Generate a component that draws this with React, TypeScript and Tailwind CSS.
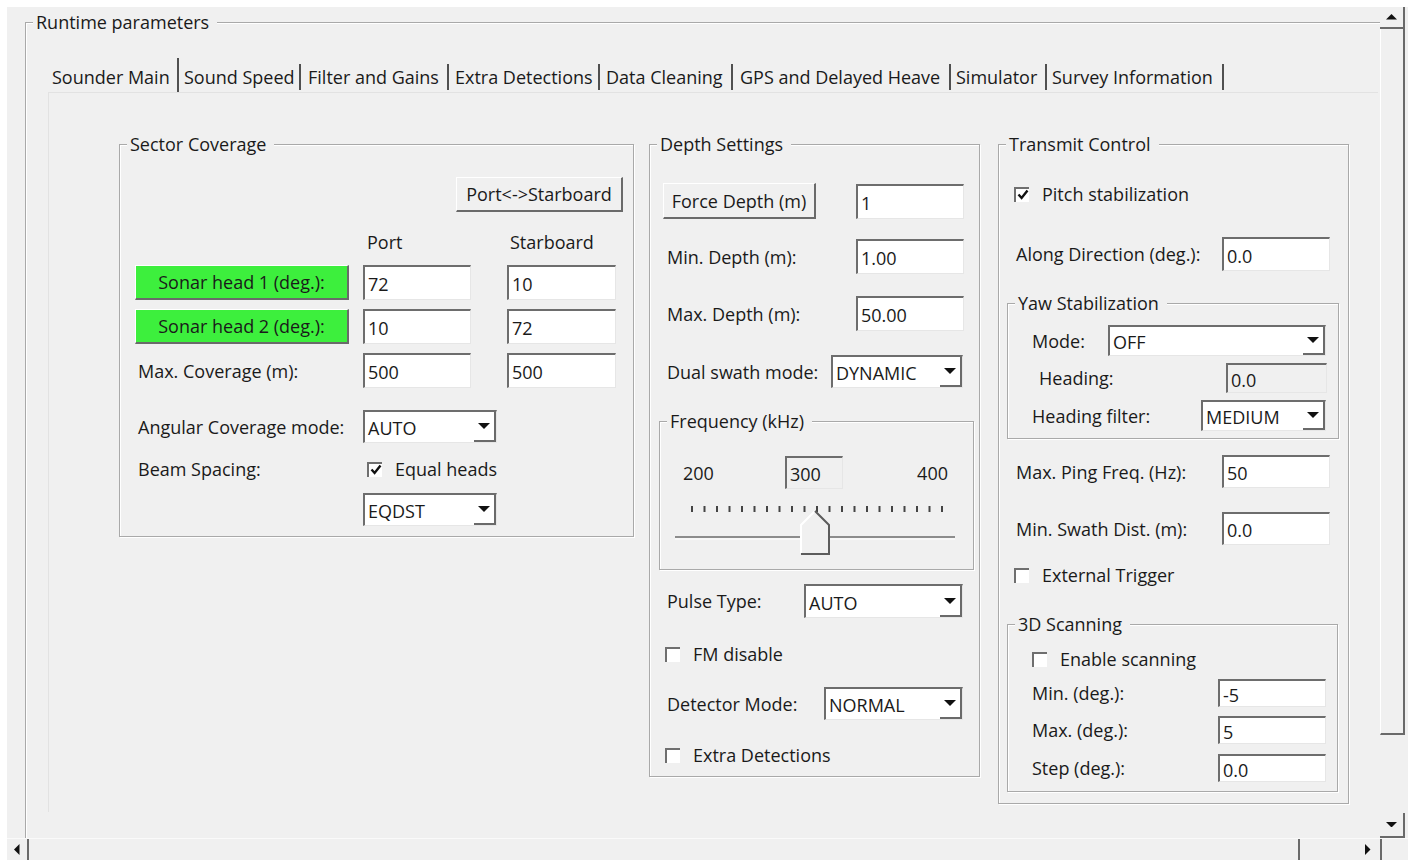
import React from "react";

// classic 3D edges
const sunken =
  "border-t-2 border-l-2 border-r border-b border-t-[#6d6d6d] border-l-[#6d6d6d] border-r-[#e6e6e6] border-b-[#e6e6e6]";
const raised =
  "border-t border-l border-r-2 border-b-2 border-t-white border-l-white border-r-[#6a6a6a] border-b-[#6a6a6a]";

type Dir = "up" | "down" | "left" | "right";

const Tri = ({ dir, size = 11 }: { dir: Dir; size?: number }) => {
  const pts: Record<Dir, string> = {
    down: "0,0 10,0 5,5",
    up: "0,5 10,5 5,0",
    right: "0,0 5,5 0,10",
    left: "5,0 0,5 5,10",
  };
  const vertical = dir === "up" || dir === "down";
  return (
    <svg
      width={vertical ? size : size / 2}
      height={vertical ? size / 2 : size}
      viewBox={vertical ? "0 0 10 5" : "0 0 5 10"}
    >
      <polygon points={pts[dir]} fill="#111" />
    </svg>
  );
};

interface FieldProps {
  value: string;
  className?: string;
  disabled?: boolean;
}

const Entry = ({ value, className = "", disabled = false }: FieldProps) => (
  <div
    className={`flex items-center pl-[3px] pt-[2px] ${sunken} ${
      disabled ? "bg-[#f0f0f0]" : "bg-white"
    } ${className}`}
  >
    {value}
  </div>
);

const Combo = ({ value, className = "" }: FieldProps) => (
  <div className={`flex items-stretch bg-white ${sunken} ${className}`}>
    <span className="flex-1 flex items-center pl-[3px] pt-[2px]">{value}</span>
    <span className="w-[22px] flex items-center justify-center border-r-2 border-b-2 border-[#6a6a6a]">
      <Tri dir="down" size={12} />
    </span>
  </div>
);

const Check = ({
  label,
  checked = false,
  className = "",
}: {
  label: string;
  checked?: boolean;
  className?: string;
}) => (
  <div className={`flex items-center h-[24px] ${className}`}>
    <span className="w-[15px] h-[15px] flex items-center justify-center bg-white border-t-2 border-l-2 border-[#6f6f6f]">
      {checked && (
        <svg width="12" height="12" viewBox="0 0 12 12">
          <path d="M1.5 5.5 L4.6 9 L10.5 1.5" fill="none" stroke="#111" strokeWidth="2.4" />
        </svg>
      )}
    </span>
    <span className="ml-[13px]">{label}</span>
  </div>
);

const Group = ({
  title,
  className = "",
  children,
}: {
  title: string;
  className?: string;
  children: React.ReactNode;
}) => (
  <fieldset
    className={`min-w-0 border border-[#a9a9a9] shadow-[1px_1px_0_#fff,inset_1px_1px_0_#fff] ${className}`}
  >
    <legend className="ml-[7px] pl-[3px] pr-[8px] leading-[22px] bg-[#f0f0f0]">{title}</legend>
    {children}
  </fieldset>
);

const PushButton = ({ label, className = "" }: { label: string; className?: string }) => (
  <button className={`flex items-center justify-center whitespace-nowrap ${raised} ${className}`}>
    {label}
  </button>
);

// notebook tabs with their widths on the strip
const tabs = [
  { label: "Sounder Main", w: "w-[129px] pl-[4px]" },
  { label: "Sound Speed", w: "w-[120px] pl-[5px]" },
  { label: "Filter and Gains", w: "w-[146px] pl-[7px]" },
  { label: "Extra Detections", w: "w-[149px] pl-[6px]" },
  { label: "Data Cleaning", w: "w-[131px] pl-[6px]" },
  { label: "GPS and Delayed Heave", w: "w-[216px] pl-[7px]" },
  { label: "Simulator", w: "w-[94px] pl-[5px]" },
  { label: "Survey Information", w: "w-[175px] pl-[5px]" },
];

// frequency slider: 21 ticks, groove and an up-pointing thumb
const FreqSlider = () => {
  const ticks = Array.from({ length: 21 }, (_, i) => 32 + i * 12.5);
  return (
    <svg width="313" height="62" className="mt-[7px]">
      {ticks.map((x) => (
        <rect key={x} x={x - 1} y={10} width={2} height={6} fill="#444" />
      ))}
      <line x1="15" y1="41" x2="295" y2="41" stroke="#8c8c8c" strokeWidth="2" />
      <line x1="15" y1="43" x2="295" y2="43" stroke="#ffffff" strokeWidth="1" />
      <polygon points="141,58 141,29 155,15 169,29 169,58" fill="#f0f0f0" />
      <polyline points="141,57 141,29 155,15" fill="none" stroke="#ffffff" strokeWidth="2" />
      <polyline points="155,15 169,29 169,58 141,58" fill="none" stroke="#5c5c5c" strokeWidth="2" />
    </svg>
  );
};

const SectorCoverage = () => (
  <Group title="Sector Coverage" className="w-[515px] h-[404px]">
    <div className="flex flex-col pl-[15px]">
      <div className="flex justify-end pr-[10px] mt-[22px]">
        <PushButton label="Port<->Starboard" className="w-[167px] h-[35px] bg-[#f0f0f0]" />
      </div>
      <div className="flex mt-[19px] h-[22px] leading-[22px]">
        <span className="w-[228px]" />
        <span className="w-[144px] pl-[4px]">Port</span>
        <span className="pl-[3px]">Starboard</span>
      </div>
      <div className="flex items-center mt-[12px]">
        <PushButton label="Sonar head 1 (deg.):" className="w-[214px] h-[35px] bg-[#3def3d]" />
        <Entry value="72" className="ml-[14px] w-[108px] h-[35px]" />
        <Entry value="10" className="ml-[36px] w-[109px] h-[35px]" />
      </div>
      <div className="flex items-center mt-[9px]">
        <PushButton label="Sonar head 2 (deg.):" className="w-[214px] h-[35px] bg-[#3def3d]" />
        <Entry value="10" className="ml-[14px] w-[108px] h-[35px]" />
        <Entry value="72" className="ml-[36px] w-[109px] h-[35px]" />
      </div>
      <div className="flex items-center mt-[9px]">
        <span className="w-[228px] pl-[3px]">Max. Coverage (m):</span>
        <Entry value="500" className="w-[108px] h-[35px]" />
        <Entry value="500" className="ml-[36px] w-[109px] h-[35px]" />
      </div>
      <div className="flex items-center mt-[22px]">
        <span className="w-[228px] pl-[3px] whitespace-nowrap">Angular Coverage mode:</span>
        <Combo value="AUTO" className="w-[134px] h-[33px]" />
      </div>
      <div className="flex items-center mt-[14px]">
        <span className="w-[228px] pl-[3px]">Beam Spacing:</span>
        <Check label="Equal heads" checked className="pl-[4px]" />
      </div>
      <div className="flex items-center mt-[12px] pl-[228px]">
        <Combo value="EQDST" className="w-[134px] h-[33px]" />
      </div>
    </div>
  </Group>
);

const DepthSettings = () => (
  <Group title="Depth Settings" className="ml-[15px] w-[331px] h-[644px]">
    <div className="flex flex-col">
      <div className="flex items-center mt-[28px]">
        <PushButton label="Force Depth (m)" className="ml-[13px] w-[153px] h-[36px] bg-[#f0f0f0]" />
        <Entry value="1" className="ml-[40px] w-[108px] h-[35px]" />
      </div>
      <div className="flex items-center mt-[20px]">
        <span className="w-[206px] pl-[17px]">Min. Depth (m):</span>
        <Entry value="1.00" className="w-[108px] h-[35px]" />
      </div>
      <div className="flex items-center mt-[22px]">
        <span className="w-[206px] pl-[17px]">Max. Depth (m):</span>
        <Entry value="50.00" className="w-[108px] h-[35px]" />
      </div>
      <div className="flex items-center mt-[24px]">
        <span className="w-[181px] pl-[17px] whitespace-nowrap">Dual swath mode:</span>
        <Combo value="DYNAMIC" className="w-[132px] h-[33px]" />
      </div>
      <Group title="Frequency (kHz)" className="mt-[22px] ml-[9px] w-[315px] h-[160px]">
        <div className="flex items-center mt-[24px] h-[33px]">
          <span className="ml-[23px] w-[102px]">200</span>
          <Entry value="300" disabled className="w-[58px] h-[33px]" />
          <span className="ml-auto mr-[25px]">400</span>
        </div>
        <FreqSlider />
      </Group>
      <div className="flex items-center mt-[14px]">
        <span className="w-[154px] pl-[17px]">Pulse Type:</span>
        <Combo value="AUTO" className="w-[159px] h-[34px]" />
      </div>
      <Check label="FM disable" className="mt-[24px] pl-[15px]" />
      <div className="flex items-center mt-[21px]">
        <span className="w-[174px] pl-[17px] whitespace-nowrap">Detector Mode:</span>
        <Combo value="NORMAL" className="w-[139px] h-[33px]" />
      </div>
      <Check label="Extra Detections" className="mt-[23px] pl-[15px]" />
    </div>
  </Group>
);

const TransmitControl = () => (
  <Group title="Transmit Control" className="ml-[18px] w-[351px] h-[671px]">
    <div className="flex flex-col">
      <Check label="Pitch stabilization" checked className="mt-[27px] pl-[15px]" />
      <div className="flex items-center mt-[31px]">
        <span className="w-[223px] pl-[17px] whitespace-nowrap">Along Direction (deg.):</span>
        <Entry value="0.0" className="w-[108px] h-[34px]" />
      </div>
      <Group title="Yaw Stabilization" className="mt-[21px] ml-[8px] w-[332px] h-[147px]">
        <div className="flex flex-col">
          <div className="flex items-center mt-[11px]">
            <span className="w-[100px] pl-[24px]">Mode:</span>
            <Combo value="OFF" className="w-[218px] h-[31px]" />
          </div>
          <div className="flex items-center mt-[7px]">
            <span className="w-[218px] pl-[31px]">Heading:</span>
            <Entry value="0.0" disabled className="w-[101px] h-[30px]" />
          </div>
          <div className="flex items-center mt-[7px]">
            <span className="w-[193px] pl-[24px] whitespace-nowrap">Heading filter:</span>
            <Combo value="MEDIUM" className="w-[125px] h-[31px]" />
          </div>
        </div>
      </Group>
      <div className="flex items-center mt-[16px]">
        <span className="w-[223px] pl-[17px] whitespace-nowrap">Max. Ping Freq. (Hz):</span>
        <Entry value="50" className="w-[108px] h-[33px]" />
      </div>
      <div className="flex items-center mt-[24px]">
        <span className="w-[223px] pl-[17px] whitespace-nowrap">Min. Swath Dist. (m):</span>
        <Entry value="0.0" className="w-[108px] h-[33px]" />
      </div>
      <Check label="External Trigger" className="mt-[18px] pl-[15px]" />
      <Group title="3D Scanning" className="mt-[26px] ml-[8px] w-[331px] h-[179px]">
        <div className="flex flex-col">
          <Check label="Enable scanning" className="mt-[12px] pl-[24px]" />
          <div className="flex items-center mt-[8px]">
            <span className="w-[210px] pl-[24px]">Min. (deg.):</span>
            <Entry value="-5" className="w-[108px] h-[28px]" />
          </div>
          <div className="flex items-center mt-[9px]">
            <span className="w-[210px] pl-[24px]">Max. (deg.):</span>
            <Entry value="5" className="w-[108px] h-[28px]" />
          </div>
          <div className="flex items-center mt-[10px]">
            <span className="w-[210px] pl-[24px]">Step (deg.):</span>
            <Entry value="0.0" className="w-[108px] h-[28px]" />
          </div>
        </div>
      </Group>
    </div>
  </Group>
);

const VScroll = () => (
  <div className="w-[25px] mr-[3px] flex flex-col">
    <div className="h-[22px] flex items-center justify-center border-r-2 border-b-2 border-[#6a6a6a]">
      <Tri dir="up" />
    </div>
    <div className="h-[706px] border-l border-l-white border-r-2 border-b-2 border-r-[#6a6a6a] border-b-[#6a6a6a]" />
    <div className="flex-1" />
    <div className="h-[25px] flex items-center justify-center border-r-2 border-b-2 border-[#6a6a6a]">
      <Tri dir="down" />
    </div>
  </div>
);

const HScroll = () => (
  <div className="h-[22px] flex border-t border-t-[#fafafa]">
    <div className="w-[22px] flex items-center justify-center border-r-2 border-[#6a6a6a]">
      <Tri dir="left" />
    </div>
    <div className="w-[1271px] border-r-2 border-[#6a6a6a]" />
    <div className="flex-1" />
    <div className="w-[24px] flex items-center justify-center">
      <Tri dir="right" />
    </div>
    <div className="w-[28px] border-l-2 border-[#6a6a6a]" />
  </div>
);

export default function App() {
  return (
    <div className="w-[1408px] h-[860px] bg-white pt-[7px] pl-[7px] overflow-hidden font-['Open_Sans','Noto_Sans',sans-serif] text-[18px] leading-[22px] text-[#1a1a1a]">
      <div className="flex flex-col h-full bg-[#f0f0f0]">
        <div className="flex flex-1 min-h-0">
          <div className="flex-1 overflow-hidden pl-[18px] pt-[4px]">
            <Group title="Runtime parameters" className="w-[1370px] pb-[40px]">
              <div className="ml-[22px] mt-[25px] w-[1330px]">
                <div className="flex h-[34px]">
                  {tabs.map((t, i) => (
                    <div key={t.label} className="flex items-center">
                      <span className={`${t.w} pt-[4px] whitespace-nowrap`}>{t.label}</span>
                      <span
                        className={`w-[2px] bg-[#505050] ${i === 0 ? "self-stretch" : "h-[26px] mt-[4px]"}`}
                      />
                    </div>
                  ))}
                </div>
                <div className="h-[720px] border-t border-l border-[#e2e2e2] pt-[40px] pl-[70px] flex items-start">
                  <SectorCoverage />
                  <DepthSettings />
                  <TransmitControl />
                </div>
              </div>
            </Group>
          </div>
          <VScroll />
        </div>
        <HScroll />
      </div>
    </div>
  );
}
